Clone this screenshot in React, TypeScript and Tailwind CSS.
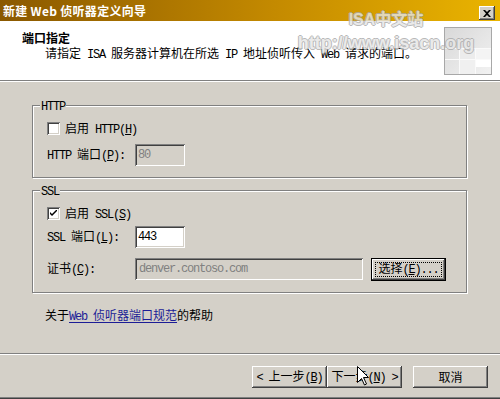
import React from "react"

const raised = "shadow-[inset_-1px_-1px_#404040,inset_1px_1px_#fff,inset_-2px_-2px_#808080,inset_2px_2px_#d4d0c8]"
const sunken = "shadow-[inset_1px_1px_#808080,inset_-1px_-1px_#fff,inset_2px_2px_#404040,inset_-2px_-2px_#d4d0c8]"

// half-width latin, like SimSun
const M = ({ children, className = "" }: { children: React.ReactNode; className?: string }) => (
  <span className={`font-['Liberation_Mono',monospace] text-[12px] tracking-[-1.2px] ${className}`}>{children}</span>
)

const Key = ({ k }: { k: string }) => (
  <M>
    (<span className="underline underline-offset-[1px]">{k}</span>)
  </M>
)

const Checkbox = ({ checked = false }: { checked?: boolean }) => (
  <div className={`flex h-[13px] w-[13px] shrink-0 items-center justify-center bg-white ${sunken}`}>
    {checked && (
      <svg width="7" height="7" viewBox="0 0 7 7">
        <path d="M0 2 L0 4 L2 6 L7 1 L7 -1 L2 4 Z" fill="#000" />
      </svg>
    )}
  </div>
)

const Group = ({ label, children }: { label: string; children: React.ReactNode }) => (
  <div className="relative w-[435px] border border-[#808080] shadow-[1px_1px_#fff,inset_1px_1px_#fff]">
    <span className="absolute -top-[8px] left-[7px] bg-[#d4d0c8] px-[1px] leading-[14px]">
      <M>{label}</M>
    </span>
    {children}
  </div>
)

const Btn = ({ children, className = "" }: { children: React.ReactNode; className?: string }) => (
  <div className={`flex h-[22px] w-[75px] items-center justify-center bg-[#d4d0c8] leading-[14px] ${raised} ${className}`}>{children}</div>
)

const HeaderIcon = () => (
  <svg width="48" height="48" viewBox="0 0 48 48">
    <defs>
      <linearGradient id="g" x1="0" y1="0" x2="1" y2="1">
        <stop offset="0" stopColor="#d8d8d8" />
        <stop offset="1" stopColor="#f2f2f2" />
      </linearGradient>
    </defs>
    <rect x="0.5" y="0.5" width="47" height="47" fill="url(#g)" stroke="#a8a8a8" />
    <rect x="16" y="22" width="15" height="10" fill="#ececec" />
    <rect x="32" y="22" width="15" height="10" fill="#f4f4f4" />
    <rect x="16" y="33" width="15" height="14" fill="#f0f0f0" />
    <rect x="32" y="33" width="15" height="7" fill="#ffffff" />
    <path d="M1 21.5 H47 M1 32.5 H47 M15.5 21 V47 M31.5 21 V47" stroke="#fafafa" />
  </svg>
)

export default function App() {
  return (
    <div className="relative flex h-[399px] w-[500px] flex-col overflow-hidden bg-[#d4d0c8] font-['Noto_Sans_CJK_SC',sans-serif] text-[12px] text-black">
      {/* title bar */}
      <div className="flex h-[21px] items-start justify-between bg-[linear-gradient(to_right,#8a5800,#c48a00_55%,#eab400)] pl-[3px] pr-[5px]">
        <span className="mt-[4px] text-[12px] font-bold leading-[14px] tracking-[0.3px] text-white">新建 Web 侦听器定义向导</span>
        <div className={`mt-[6px] flex h-[14px] w-[16px] items-center justify-center bg-[#d4d0c8] ${raised}`}>
          <svg width="8" height="7" viewBox="0 0 8 7">
            <path d="M0 0 H2 L4 2 L6 0 H8 L5 3.5 L8 7 H6 L4 5 L2 7 H0 L3 3.5 Z" fill="#000" />
          </svg>
        </div>
      </div>

      {/* header */}
      <div className="flex h-[60px] justify-between border-b border-[#808080] bg-white">
        <div className="pl-[22px] pt-[10px] leading-[14px]">
          <div className="font-bold">端口指定</div>
          <div className="mt-[1px] pl-[23px]">
            请指定<M> ISA </M>服务器计算机在所选<M> IP </M>地址侦听传入<M> Web </M>请求的端口。
          </div>
        </div>
        <div className="mr-[8px] mt-[6px]">
          <HeaderIcon />
        </div>
      </div>
      <div className="h-px bg-white" />

      {/* watermark */}
      <div className="pointer-events-none absolute left-[297px] top-[8px] flex w-[178px] flex-col items-center font-['Liberation_Sans',sans-serif] font-bold text-[#e6e6e6] opacity-80 [text-shadow:1px_0_#a8a8a8,-1px_0_#a8a8a8,0_1px_#a8a8a8,0_-1px_#a8a8a8]">
        <span className="text-[16px] leading-[20px]">
          ISA<span className="font-['Noto_Sans_CJK_SC',sans-serif]">中文站</span>
        </span>
        <span className="mt-[3px] text-[18px] leading-[20px]">http://www.isacn.org</span>
      </div>

      {/* body */}
      <div className="flex flex-1 flex-col pl-[32px] pt-[23px] leading-[14px]">
        <Group label="HTTP">
          <div className="pb-[11px] pl-[14px] pt-[16px]">
            <div className="flex h-[13px] items-center">
              <Checkbox />
              <span className="ml-[5px]">
                启用<M> HTTP</M>
                <Key k="H" />
              </span>
            </div>
            <div className="mt-[9px] flex h-[22px] items-center">
              <span className="w-[88px]">
                <M>HTTP </M>端口<Key k="P" />
                <M>:</M>
              </span>
              <div className={`flex h-[22px] w-[50px] items-center pl-[3px] ${sunken}`}>
                <M className="text-[#808080]">80</M>
              </div>
            </div>
          </div>
        </Group>

        <div className="mt-[12px]">
          <Group label="SSL">
            <div className="pb-[12px] pl-[14px] pt-[16px]">
              <div className="flex h-[13px] items-center">
                <Checkbox checked />
                <span className="ml-[5px]">
                  启用<M> SSL</M>
                  <Key k="S" />
                </span>
              </div>
              <div className="mt-[6px] flex h-[22px] items-center">
                <span className="w-[88px]">
                  <M>SSL </M>端口<Key k="L" />
                  <M>:</M>
                </span>
                <div className={`flex h-[22px] w-[50px] items-center bg-white pl-[3px] ${sunken}`}>
                  <M>443</M>
                </div>
              </div>
              <div className="mt-[10px] flex h-[22px] items-center">
                <span className="w-[88px]">
                  证书<Key k="C" />
                  <M>:</M>
                </span>
                <div className={`flex h-[22px] w-[228px] items-center pl-[4px] ${sunken}`}>
                  <M className="text-[#808080]">denver.contoso.com</M>
                </div>
                <div className="relative ml-[8px] flex h-[23px] w-[75px] items-center justify-center bg-[#d4d0c8] shadow-[inset_0_0_0_1px_#000,inset_-2px_-2px_#404040,inset_2px_2px_#fff,inset_-3px_-3px_#808080]">
                  <span>
                    选择<Key k="E" />
                    <M>...</M>
                  </span>
                  <div className="pointer-events-none absolute inset-[4px] border border-dotted border-black" />
                </div>
              </div>
            </div>
          </Group>
        </div>

        <div className="mt-[15px] pl-[13px]">
          关于
          <span className="text-[#1c1c96] underline underline-offset-[2px]">
            <M>Web </M>侦听器端口规范
          </span>
          的帮助
        </div>
      </div>

      {/* footer */}
      <div className="border-t border-[#808080]" />
      <div className="h-px bg-white" />
      <div className="flex h-[42px] items-start justify-end pr-[12px] pt-[11px]">
        <Btn>
          <span>
            <M>&lt; </M>上一步<Key k="B" />
          </span>
        </Btn>
        <Btn>
          <span>
            下一步<Key k="N" />
            <M> &gt;</M>
          </span>
        </Btn>
        <Btn className="ml-[11px]">取消</Btn>
      </div>
      <div className="h-px bg-[#808080]" />
      <div className="h-px bg-[#404040]" />

      {/* mouse pointer */}
      <svg className="pointer-events-none absolute left-[357px] top-[366px]" width="13" height="20" viewBox="0 0 13 20">
        <path d="M0.5 0.5 L0.5 16.5 L4.5 12.5 L7.5 19 L9.5 18 L6.5 11.5 L11.5 11.5 Z" fill="#fff" stroke="#000" />
      </svg>
    </div>
  )
}
